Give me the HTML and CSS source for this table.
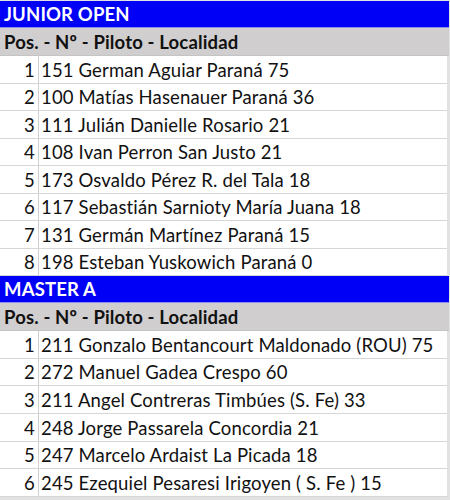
FILE: index.html
```html
<!DOCTYPE html>
<html lang="es">
<head>
<meta charset="utf-8">
<link rel="stylesheet" href="styles.css">
</head>
<body>
<div class="sheet">
  <div class="cat">JUNIOR OPEN</div>
  <div class="head">Pos. - Nº - Piloto - Localidad</div>
  <div class="row"><span class="pos">1</span><span class="txt">151 German Aguiar Paraná 75</span></div>
  <div class="row"><span class="pos">2</span><span class="txt">100 Matías Hasenauer Paraná 36</span></div>
  <div class="row"><span class="pos">3</span><span class="txt">111 Julián Danielle Rosario 21</span></div>
  <div class="row"><span class="pos">4</span><span class="txt">108 Ivan Perron San Justo 21</span></div>
  <div class="row"><span class="pos">5</span><span class="txt">173 Osvaldo Pérez R. del Tala 18</span></div>
  <div class="row"><span class="pos">6</span><span class="txt">117 Sebastián Sarnioty María Juana 18</span></div>
  <div class="row"><span class="pos">7</span><span class="txt">131 Germán Martínez Paraná 15</span></div>
  <div class="row"><span class="pos">8</span><span class="txt">198 Esteban Yuskowich Paraná 0</span></div>
  <div class="cat">MASTER A</div>
  <div class="head">Pos. - Nº - Piloto - Localidad</div>
  <div class="row"><span class="pos">1</span><span class="txt">211 Gonzalo Bentancourt Maldonado (ROU) 75</span></div>
  <div class="row"><span class="pos">2</span><span class="txt">272 Manuel Gadea Crespo 60</span></div>
  <div class="row"><span class="pos">3</span><span class="txt">211 Angel Contreras Timbúes (S. Fe) 33</span></div>
  <div class="row"><span class="pos">4</span><span class="txt">248 Jorge Passarela Concordia 21</span></div>
  <div class="row"><span class="pos">5</span><span class="txt">247 Marcelo Ardaist La Picada 18</span></div>
  <div class="row"><span class="pos">6</span><span class="txt">245 Ezequiel Pesaresi Irigoyen ( S. Fe ) 15</span></div>
</div>
</body>
</html>
```
FILE: styles.css
```css
html, body {
  margin: 0;
  padding: 0;
  background: #e2e2e2;
}
body {
  font-family: Lato, "Open Sans", sans-serif;
  font-size: 18.5px;
  letter-spacing: 0.15px;
  color: #111;
}
.sheet {
  width: 450px;
  padding-top: 1px;
}
.cat {
  width: 449px;
  height: 27px;
  background: #0000f6;
  color: #fff;
  font-weight: bold;
  padding-left: 4px;
  box-sizing: border-box;
  display: flex;
  align-items: flex-end;
  padding-bottom: 2px;
  border-bottom: 1px solid #8a8cf0;
}
.head {
  width: 449px;
  height: 28px;
  background: #d0cece;
  font-weight: bold;
  padding-left: 4px;
  box-sizing: border-box;
  display: flex;
  align-items: flex-end;
  padding-bottom: 2px;
  border-bottom: 1px solid #c4c4c4;
}
.row {
  width: 447px;
  height: 27.55px;
  box-sizing: border-box;
  background: #fff;
  display: grid;
  grid-template-columns: 39px 1fr;
  border-bottom: 1px solid #d6d6d6;
}
.pos {
  padding-right: 3px;
  border-right: 1px solid #cfcfcf;
  display: flex;
  align-items: flex-end;
  justify-content: flex-end;
  padding-bottom: 2px;
}
.txt {
  padding-left: 2px;
  display: flex;
  align-items: flex-end;
  padding-bottom: 2px;
  white-space: nowrap;
}
```
